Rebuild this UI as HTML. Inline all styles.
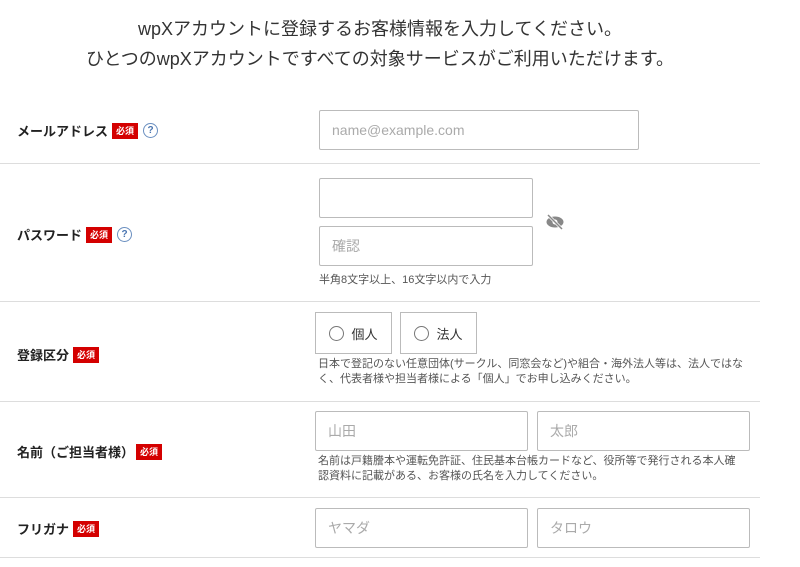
<!DOCTYPE html><html><head><meta charset="utf-8"><style>
body{margin:0;width:800px;height:567px;background:#fff;font-family:"Liberation Sans","Noto Sans CJK JP",sans-serif;color:#333;position:relative;overflow:hidden}
.a{position:absolute}
.t{left:0;width:760px;text-align:center;font-size:18px;color:#333}
.hr{left:0;width:760px;height:1px;background:#ddd}
.lb{left:17px;font-size:13px;font-weight:bold;color:#222;display:flex;align-items:center;white-space:nowrap}
.bd{background:#d40000;color:#fff;font-size:9px;font-weight:bold;padding:3px 4px;margin-left:4px;line-height:10px}
.q{width:13px;height:13px;border:1.5px solid #6a8fc0;border-radius:50%;color:#4a75b0;font-size:10px;text-align:center;line-height:13px;margin-left:5px;font-weight:bold}
.in{border:1px solid #bbb;border-radius:2px;box-sizing:border-box;font-size:14px;color:#aaa;padding-left:12px;display:flex;align-items:center}
.n{font-size:11px;color:#555;line-height:15px}
.r{border:1px solid #bbb;box-sizing:border-box;display:flex;align-items:center;justify-content:center;font-size:13px;color:#333}
.c{width:13px;height:13px;border:1px solid #777;border-radius:50%;margin-right:7px}
</style></head><body>
<div class="a t" style="top:15px">wpXアカウントに登録するお客様情報を入力してください。</div>
<div class="a t" style="top:45px">ひとつのwpXアカウントですべての対象サービスがご利用いただけます。</div>
<div class="a hr" style="top:163px"></div>
<div class="a hr" style="top:301px"></div>
<div class="a hr" style="top:401px"></div>
<div class="a hr" style="top:497px"></div>
<div class="a hr" style="top:557px"></div>
<div class="a lb" style="top:121px">メールアドレス<span class="bd">必須</span><span class="q">?</span></div>
<div class="a in" style="left:319px;top:110px;width:320px;height:40px">name@example.com</div>
<div class="a lb" style="top:225px">パスワード<span class="bd">必須</span><span class="q">?</span></div>
<div class="a in" style="left:319px;top:178px;width:214px;height:40px"></div>
<div class="a in" style="left:319px;top:226px;width:214px;height:40px">確認</div>
<svg class="a" style="left:545px;top:213px" width="20" height="18" viewBox="0 0 20 18"><ellipse cx="10" cy="9" rx="8.5" ry="5.5" fill="#888"/><circle cx="10" cy="9" r="2.5" fill="#fff"/><line x1="3" y1="2" x2="17" y2="16" stroke="#fff" stroke-width="3"/><line x1="3" y1="2" x2="17" y2="16" stroke="#888" stroke-width="1.5"/></svg>
<div class="a n" style="left:319px;top:273px">半角8文字以上、16文字以内で入力</div>
<div class="a lb" style="top:345px">登録区分<span class="bd">必須</span></div>
<div class="a r" style="left:315px;top:312px;width:77px;height:42px"><span class="c"></span>個人</div>
<div class="a r" style="left:400px;top:312px;width:77px;height:42px"><span class="c"></span>法人</div>
<div class="a n" style="left:318px;top:357px">日本で登記のない任意団体(サークル、同窓会など)や組合・海外法人等は、法人ではな<br>く、代表者様や担当者様による「個人」でお申し込みください。</div>
<div class="a lb" style="top:442px">名前（ご担当者様）<span class="bd" style="margin-left:2px">必須</span></div>
<div class="a in" style="left:315px;top:411px;width:213px;height:40px">山田</div>
<div class="a in" style="left:537px;top:411px;width:213px;height:40px">太郎</div>
<div class="a n" style="left:318px;top:454px">名前は戸籍謄本や運転免許証、住民基本台帳カードなど、役所等で発行される本人確<br>認資料に記載がある、お客様の氏名を入力してください。</div>
<div class="a lb" style="top:519px">フリガナ<span class="bd">必須</span></div>
<div class="a in" style="left:315px;top:508px;width:213px;height:40px">ヤマダ</div>
<div class="a in" style="left:537px;top:508px;width:213px;height:40px">タロウ</div>
</body></html>
